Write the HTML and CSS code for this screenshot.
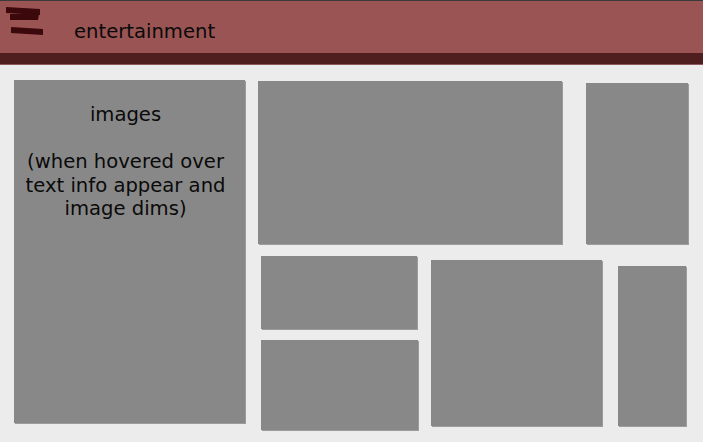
FILE: index.html
```html
<!DOCTYPE html>
<html lang="en">
<head>
    <meta charset="UTF-8">
    <meta name="viewport" content="width=device-width, initial-scale=1.0">
    <title>entertainment</title>
    <link rel="stylesheet" href="styles.css">
</head>
<body>

    <!-- Top bar -->
    <header class="topbar">
        <svg class="menu-icon" width="46" height="36" viewBox="0 0 46 36">
            <polygon points="6,6 40,8 40,14 6,12" fill="#3b080b"/>
            <polygon points="10,13 39,13 38,19 10,19" fill="#3b080b"/>
            <polygon points="11,26 43,28 43,34 11,32" fill="#3b080b"/>
        </svg>
        <span class="title">entertainment</span>
    </header>
    <div class="topbar-shade"></div>

    <!-- Image wall -->
    <main class="wall">
        <div class="tile tile-main">
            <p>images</p>
            <p>&nbsp;</p>
            <p>(when hovered over text info appear and image dims)</p>
        </div>

        <div class="wall-right">
            <div class="row row-top">
                <div class="tile tile-wide"></div>
                <div class="tile tile-tall"></div>
            </div>
            <div class="row row-bottom">
                <div class="stack">
                    <div class="tile tile-small"></div>
                    <div class="tile tile-small2"></div>
                </div>
                <div class="tile tile-mid"></div>
                <div class="tile tile-narrow"></div>
            </div>
        </div>
    </main>

</body>
</html>
```

FILE: styles.css
```css
body {
    margin: 0;
    padding: 0;
    background: #ececec;
    font-family: 'DejaVu Sans', sans-serif;
    color: #0a0a0a;
    height: 442px;
    overflow: hidden;
}

.topbar {
    height: 52px;
    border-top: 1px solid #3a3a3a;
    background: #9a5453;
    display: flex;
    align-items: center;
}

.topbar-shade {
    height: 11px;
    background: #4f1f20;
    border-bottom: 1px solid #8c5a5a;
}

.menu-icon {
    align-self: flex-start;
    flex-shrink: 0;
}

.title {
    font-size: 19.6px;
    margin-left: 28px;
    margin-top: 8px;
}

.wall {
    display: flex;
    align-items: flex-start;
}

.tile {
    background: #888;
    box-shadow: 1px 1px 0 #9c9c9c;
    flex-shrink: 0;
}

/* big left image with the note */
.tile-main {
    width: 231px;
    height: 343px;
    margin: 15px 0 0 14px;
    padding: 23px 8px 0 0;
    box-sizing: border-box;
    text-align: center;
    font-size: 19.6px;
    line-height: 23.5px;
}

.tile-main p {
    margin: 0;
}

.wall-right {
    margin-left: 13px;
}

.row {
    display: flex;
    align-items: flex-start;
}

.row-top {
    margin-top: 16px;
}

.tile-wide {
    width: 304px;
    height: 163px;
}

.tile-tall {
    width: 102px;
    height: 161px;
    margin: 2px 0 0 24px;
}

.row-bottom {
    margin-top: 12px;
}

.stack {
    margin-left: 3px;
}

.tile-small {
    width: 156px;
    height: 73px;
}

.tile-small2 {
    width: 157px;
    height: 90px;
    margin-top: 11px;
}

.tile-mid {
    width: 171px;
    height: 166px;
    margin: 4px 0 0 13px;
}

.tile-narrow {
    width: 68px;
    height: 160px;
    margin: 10px 0 0 16px;
}
```
